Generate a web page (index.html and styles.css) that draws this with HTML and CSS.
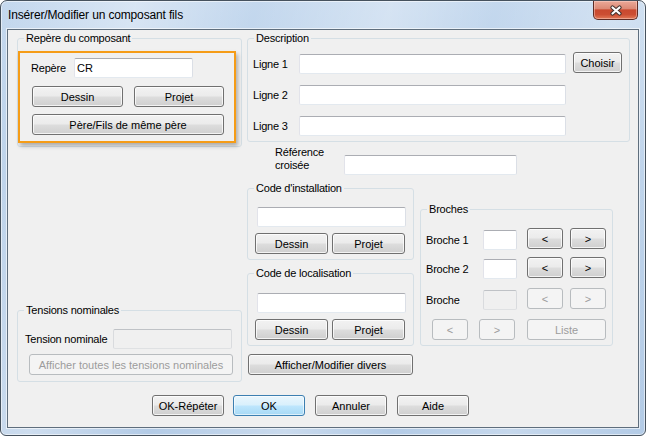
FILE: index.html
```html
<!DOCTYPE html>
<html lang="fr">
<head>
<meta charset="utf-8">
<title>Insérer/Modifier un composant fils</title>
<link rel="stylesheet" href="styles.css">
</head>
<body>
<div class="window">
  <div class="titlebar">
    <span class="title">Insérer/Modifier un composant fils</span>
    <button class="close" aria-label="Fermer"><svg width="14" height="11" viewBox="0 0 14 11"><path d="M3.5 2.5 L10.5 8.5 M10.5 2.5 L3.5 8.5" stroke="#40302c" stroke-width="4.2" stroke-linecap="round"/><path d="M3.5 2.5 L10.5 8.5 M10.5 2.5 L3.5 8.5" stroke="#ffffff" stroke-width="2.2" stroke-linecap="round"/></svg></button>
  </div>
  <div class="client">
    <div class="main">
      <div class="col-left">
        <fieldset class="grp grp-repere">
          <legend>Repère du composant</legend>
          <div class="highlight">
            <div class="row r-repere"><span class="lbl w-43">Repère</span><input class="txt w-119" type="text" value="CR"></div>
            <div class="row r-btns"><button class="btn w-91 ml-12">Dessin</button><button class="btn w-90 ml-11">Projet</button></div>
            <div class="row r-pere"><button class="btn w-192 ml-12">Père/Fils de même père</button></div>
          </div>
        </fieldset>
        <fieldset class="grp grp-tension">
          <legend>Tensions nominales</legend>
          <div class="tension-body">
            <div class="row r-tension"><span class="lbl w-88">Tension nominale</span><input class="txt w-119" type="text" disabled></div>
            <button class="btn w-204 ml-4 b-all" disabled>Afficher toutes les tensions nominales</button>
          </div>
        </fieldset>
      </div>
      <div class="col-right">
        <fieldset class="grp grp-desc">
          <legend>Description</legend>
          <div class="desc-body">
            <div class="row r-ligne first"><span class="lbl w-46">Ligne 1</span><input class="txt w-267" type="text"><button class="btn w-49 b-choisir">Choisir</button></div>
            <div class="row r-ligne"><span class="lbl w-46">Ligne 2</span><input class="txt w-267" type="text"></div>
            <div class="row r-ligne"><span class="lbl w-46">Ligne 3</span><input class="txt w-267" type="text"></div>
          </div>
        </fieldset>
        <div class="xref">
          <span class="xref-lbl">Référence<br>croisée</span>
          <input class="txt w-173 xref-input" type="text">
        </div>
        <div class="lower">
          <div class="lower-left">
            <fieldset class="grp grp-code">
              <legend>Code d'installation</legend>
              <div class="code-body">
                <input class="txt w-149 code-input" type="text">
                <div class="row r-code"><button class="btn w-73">Dessin</button><button class="btn w-73 ml-4">Projet</button></div>
              </div>
            </fieldset>
            <fieldset class="grp grp-code grp-loc">
              <legend>Code de localisation</legend>
              <div class="code-body">
                <input class="txt w-149 code-input loc-input" type="text">
                <div class="row r-code"><button class="btn w-73">Dessin</button><button class="btn w-73 ml-4">Projet</button></div>
              </div>
            </fieldset>
            <button class="btn w-165 b-divers">Afficher/Modifier divers</button>
          </div>
          <fieldset class="grp grp-broches">
            <legend>Broches</legend>
            <div class="broches-body">
              <div class="row r-broche first"><span class="lbl w-57">Broche 1</span><input class="txt w-34 b-in" type="text"><button class="btn w-36 ml-10">&lt;</button><button class="btn w-36 ml-7">&gt;</button></div>
              <div class="row r-broche r2"><span class="lbl w-57">Broche 2</span><input class="txt w-34 b-in" type="text"><button class="btn w-36 ml-10">&lt;</button><button class="btn w-36 ml-7">&gt;</button></div>
              <div class="row r-broche r3"><span class="lbl w-57">Broche</span><input class="txt w-34 b-in" type="text" disabled><button class="btn w-36 ml-10" disabled>&lt;</button><button class="btn w-36 ml-7" disabled>&gt;</button></div>
              <div class="row r-broche r4"><button class="btn w-36 ml-6" disabled>&lt;</button><button class="btn w-36 ml-11" disabled>&gt;</button><button class="btn w-79 ml-12" disabled>Liste</button></div>
            </div>
          </fieldset>
        </div>
      </div>
    </div>
    <div class="footer">
      <button class="btn w-72">OK-Répéter</button>
      <button class="btn w-72 b-default">OK</button>
      <button class="btn w-72">Annuler</button>
      <button class="btn w-72">Aide</button>
    </div>
  </div>
</div>
</body>
</html>
```
FILE: styles.css
```css
* { box-sizing: border-box; }
html, body { margin: 0; padding: 0; background: #ffffff; }
body {
  font-family: "Liberation Sans", Arial, sans-serif;
  font-size: 11px;
  letter-spacing: -0.2px;
  color: #000;
}

/* window frame */
.window {
  width: 646px;
  height: 436px;
  border: 1px solid #46525e;
  border-radius: 7px 7px 6px 6px;
  padding: 0 6px 7px;
  display: flex;
  flex-direction: column;
  background:
    linear-gradient(104deg, rgba(255,255,255,0) 0%, rgba(255,255,255,0.35) 18%, rgba(255,255,255,0) 34%, rgba(255,255,255,0.3) 52%, rgba(255,255,255,0) 66%, rgba(255,255,255,0.25) 82%, rgba(255,255,255,0) 100%),
    linear-gradient(#c4d8ee, #b6cee8 40%, #b3cbe6);
  box-shadow: inset 0 0 0 1px rgba(255,255,255,0.55);
}
.titlebar {
  height: 28px;
  display: flex;
  align-items: flex-start;
  padding-left: 1px;
}
.title {
  margin-top: 7px;
  line-height: 15px;
  font-size: 12px;
  letter-spacing: -0.15px;
  color: #000;
}
.close {
  margin-left: auto;
  margin-right: 1px;
  width: 45px;
  height: 19px;
  padding: 0;
  border: 1px solid #5e2c25;
  border-top: none;
  border-radius: 0 0 5px 5px;
  background: linear-gradient(#eba998 0%, #dc8a76 42%, #c9492f 50%, #cc4e33 75%, #e27a58 100%);
  box-shadow: inset 0 0 0 1px rgba(255,220,210,0.45);
  display: flex;
  align-items: center;
  justify-content: center;
}
.close svg { display: block; }

.client {
  flex: 1;
  border: 1px solid #5f6e7d;
  background: #f0f0f0;
  box-shadow: 0 0 0 1px rgba(255,255,255,0.6);
  padding: 2px 8px 0 9px;
}
.main { display: flex; gap: 5px; height: 350px; }
.col-left { width: 225px; display: flex; flex-direction: column; justify-content: space-between; }
.col-right { width: 383px; display: flex; flex-direction: column; }

/* group boxes */
fieldset.grp {
  margin: 0;
  padding: 0;
  min-width: 0;
  border: 1px solid #d5dfe5;
  border-radius: 3px;
}
legend {
  margin-left: 6px;
  padding: 0 2px;
  line-height: 13px;
}

/* generic rows / controls */
.row { display: flex; align-items: flex-start; }
.lbl { display: block; flex: none; line-height: 20px; white-space: nowrap; }
.txt {
  display: block;
  flex: none;
  height: 20px;
  margin: 0;
  padding: 0 2px;
  font: inherit;
  color: #000;
  background: #fff;
  border: 1px solid;
  border-color: #abadb3 #dbdfe6 #e3e9ef #e2e3ea;
  border-radius: 2px;
  outline: none;
}
.txt:disabled { background: #f0f0f0; border-color: #bfc2c6 #d9dbde #dfe1e3 #d9dbde; }
.btn {
  display: block;
  flex: none;
  height: 21px;
  margin: 0;
  padding: 0;
  font: inherit;
  color: #000;
  text-align: center;
  border: 1px solid #707070;
  border-radius: 3px;
  background: linear-gradient(#f2f2f2 0%, #ebebeb 48%, #dddddd 52%, #cfcfcf 100%);
  box-shadow: inset 0 0 0 1px rgba(255,255,255,0.75);
}
.btn:disabled {
  color: #9c9c9c;
  border-color: #b8bcbf;
  background: #f4f4f4;
  box-shadow: none;
}
.b-default {
  border-color: #3c7fb1;
  background: linear-gradient(#eaf6fd 0%, #d9f0fc 48%, #bee6fd 52%, #a7d9f5 100%);
  box-shadow: inset 0 0 0 1px rgba(255,255,255,0.6);
}

.w-34 { width: 34px; } .w-36 { width: 36px; } .w-43 { width: 43px; } .w-46 { width: 46px; }
.w-49 { width: 49px; } .w-57 { width: 57px; } .w-72 { width: 72px; } .w-73 { width: 73px; }
.w-79 { width: 79px; } .w-88 { width: 88px; } .w-90 { width: 90px; } .w-91 { width: 91px; }
.w-119 { width: 119px; } .w-149 { width: 149px; } .w-165 { width: 165px; } .w-173 { width: 173px; }
.w-192 { width: 192px; } .w-204 { width: 204px; } .w-267 { width: 267px; }
.ml-4 { margin-left: 4px; } .ml-6 { margin-left: 6px; } .ml-7 { margin-left: 7px; } .ml-10 { margin-left: 10px; }
.ml-11 { margin-left: 11px; } .ml-12 { margin-left: 12px; }

/* Repère du composant */
fieldset.grp-repere { padding-bottom: 3px; }
.highlight {
  margin-top: 6px;
  width: 218px;
  border: 2px solid #f59c17;
  box-shadow: 2px 3px 4px rgba(0,0,0,0.28);
  padding-bottom: 6px;
}
.r-repere { margin-top: 5px; padding-left: 11px; }
.r-btns { margin-top: 8px; }
.r-pere { margin-top: 7px; }

/* Tensions nominales */
.tension-body { padding: 0 0 6px 7px; }
.r-tension { margin-top: 12px; }
.b-all { margin-top: 5px; }

/* Description */
.desc-body { padding: 0 0 5px 5px; }
.r-ligne { margin-top: 11px; }
.r-ligne.first { margin-top: 7px; height: 22px; }
.r-ligne.first .lbl, .r-ligne.first .txt { margin-top: 2px; }
.b-choisir { margin-left: 7px; }

/* Référence croisée */
.xref { display: flex; align-items: flex-start; height: 33px; }
.xref-lbl { display: block; width: 69px; margin-left: 28px; margin-top: 4px; line-height: 13px; }
.xref-input { margin-top: 13px; }

/* lower area */
.lower { display: flex; align-items: flex-start; }
.lower-left { width: 167px; margin-top: 7px; }
.code-body { padding: 0 0 5px 0; }
.code-input { margin: 12px 0 0 9px; }
.code-input.loc-input { margin-top: 13px; }
fieldset.grp-loc { margin-top: 7px; }
.r-code { margin-top: 6px; padding-left: 7px; }
.b-divers { margin: 8px 0 0 1px; }

fieldset.grp-broches { width: 193px; margin-left: 6px; margin-top: 28px; }
.broches-body { padding: 0 0 5px 5px; }
.r-broche { margin-top: 7px; }
.r-broche.first { margin-top: 12px; }
.r-broche.r3, .r-broche.r4 { margin-top: 9px; }
.r-broche .lbl, .r-broche .b-in { margin-top: 2px; }

/* footer */
.footer { display: flex; gap: 10px; margin-top: 13px; padding-left: 135px; }
.footer .btn:first-child { margin-right: -1px; }
```
